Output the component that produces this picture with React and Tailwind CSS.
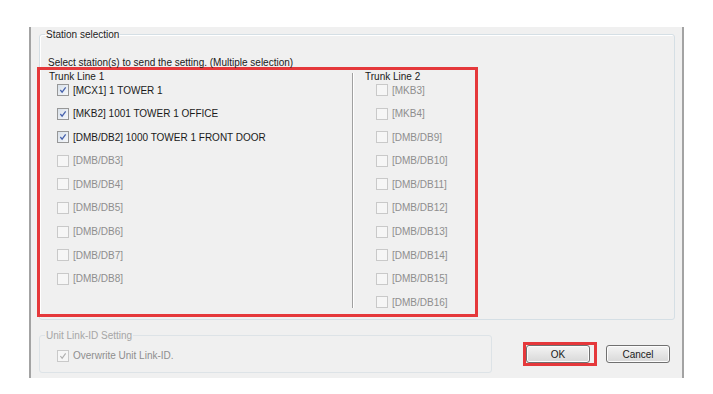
import React from "react";

const trunk1 = [
  { label: "[MCX1] 1 TOWER 1", checked: true },
  { label: "[MKB2] 1001 TOWER 1 OFFICE", checked: true },
  { label: "[DMB/DB2] 1000 TOWER 1 FRONT DOOR", checked: true },
  { label: "[DMB/DB3]" },
  { label: "[DMB/DB4]" },
  { label: "[DMB/DB5]" },
  { label: "[DMB/DB6]" },
  { label: "[DMB/DB7]" },
  { label: "[DMB/DB8]" },
];

const trunk2 = [
  "[MKB3]",
  "[MKB4]",
  "[DMB/DB9]",
  "[DMB/DB10]",
  "[DMB/DB11]",
  "[DMB/DB12]",
  "[DMB/DB13]",
  "[DMB/DB14]",
  "[DMB/DB15]",
  "[DMB/DB16]",
].map((label) => ({ label }));

function Check({ checked, disabled }) {
  if (disabled) {
    return (
      <span className="flex h-[12px] w-[12px] shrink-0 items-center justify-center border border-[#c9c9c9] bg-[#f6f6f6]">
        {checked && (
          <svg width="8" height="8" viewBox="0 0 9 9">
            <path d="M1.5 4.5 L3.5 7 L7.5 1.5" fill="none" stroke="#b0b0b0" strokeWidth="1.3" />
          </svg>
        )}
      </span>
    );
  }
  return (
    <span className="flex h-[12px] w-[12px] shrink-0 items-center justify-center border border-[#979797] bg-gradient-to-br from-[#d9e1ea] to-[#f5f7fa]">
      {checked && (
        <svg width="8" height="8" viewBox="0 0 9 9">
          <path d="M1.5 4.5 L3.5 7 L7.5 1.5" fill="none" stroke="#4560ac" strokeWidth="1.4" />
        </svg>
      )}
    </span>
  );
}

function Item({ label, checked, disabled }) {
  return (
    <div className="flex h-[13px] items-center gap-[4px]">
      <Check checked={checked} disabled={disabled} />
      <span className={disabled ? "text-[#8e8e8e]" : "text-[#1a1a1a]"}>{label}</span>
    </div>
  );
}

function Button({ children }) {
  return (
    <button className="flex h-[18px] w-[64px] items-center justify-center rounded-[3px] border border-[#707070] bg-gradient-to-b from-[#f4f4f4] to-[#d8d8d8] text-[#1a1a1a] shadow-[inset_0_0_0_1px_#fcfcfc]">
      {children}
    </button>
  );
}

export default function App() {
  return (
    <div className="h-[394px] w-[713px] bg-white pt-[27px] pl-[29px] font-['Liberation_Sans',Arial,sans-serif] text-[10px] leading-[13px]">
      <div className="flex h-[351px] w-[655px] flex-col border-x-2 border-[#a3a3a3] bg-[#f0f0f0] pl-[8px] pr-[7px]">
        {/* Station selection */}
        <fieldset className="mt-[1px] h-[292px] rounded-[3px] border border-[#d5dfe5] pl-0 shadow-[inset_1px_1px_0_#ffffff]">
          <legend className="ml-[5px] px-[1px] text-[#1e1e1e]">Station selection</legend>
          <div className="mt-[16px] h-[12px] pl-[8px] leading-[12px] text-[#1a1a1a]">
            Select station(s) to send the setting. (Multiple selection)
          </div>
          <div className="-ml-[3px] -mt-[2px] flex h-[250px] w-[441px] border-[3px] border-[#e5383b]">
            <div className="w-[312px] pl-[9px]">
              <div className="h-[13px] text-[#1a1a1a]">Trunk Line 1</div>
              <div className="mt-[0.5px] flex flex-col gap-[10.6px] pl-[8px]">
                {trunk1.map((it) => (
                  <Item key={it.label} label={it.label} checked={it.checked} disabled={!it.checked} />
                ))}
              </div>
            </div>
            <div className="mt-[3px] mb-[6px] w-[2px] border-l border-r border-l-[#a0a0a0] border-r-white" />
            <div className="pl-[11px]">
              <div className="h-[13px] text-[#1a1a1a]">Trunk Line 2</div>
              <div className="mt-[0.5px] flex flex-col gap-[10.6px] pl-[11px]">
                {trunk2.map((it) => (
                  <Item key={it.label} label={it.label} disabled />
                ))}
              </div>
            </div>
          </div>
        </fieldset>

        {/* Bottom row */}
        <div className="mt-[9px] flex items-start">
          <fieldset className="h-[44px] w-[453px] rounded-[3px] border border-[#dde3e7] pl-0">
            <legend className="ml-[5px] px-[1px] text-[#a6a6a6]">Unit Link-ID Setting</legend>
            <div className="mt-[7px] pl-[17px]">
              <Item label="Overwrite Unit Link-ID." checked disabled />
            </div>
          </fieldset>
          <div className="ml-[31px] mt-[13px] flex items-center">
            <div className="border-[3px] border-[#e5383b] pr-[4px]">
              <Button>OK</Button>
            </div>
            <div className="ml-[9px]">
              <Button>Cancel</Button>
            </div>
          </div>
        </div>
      </div>
    </div>
  );
}
